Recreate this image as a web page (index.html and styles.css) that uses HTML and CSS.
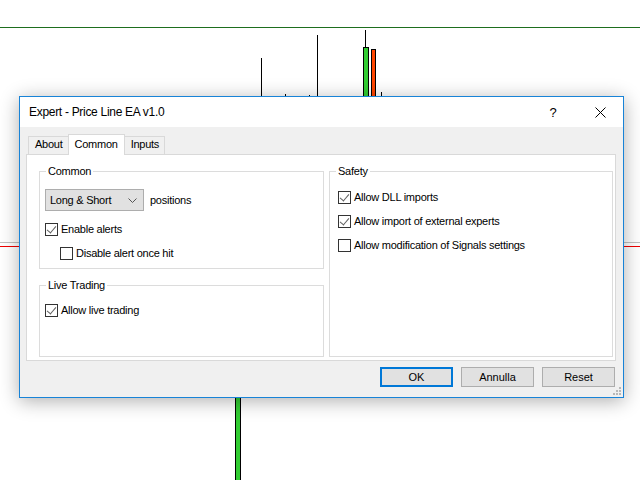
FILE: index.html
```html
<!DOCTYPE html>
<html lang="en">
<head>
    <meta charset="UTF-8">
    <title>Expert - Price Line EA v1.0</title>
    <link rel="stylesheet" href="styles.css">
</head>
<body>
    <div class="chart">
        <!-- price chart behind the dialog -->
        <svg class="chart-plot" width="640" height="480" viewBox="0 0 640 480">
            <line x1="0" y1="27.5" x2="640" y2="27.5" stroke="#1e6e1e" stroke-width="1"/>
            <line x1="0" y1="242.5" x2="640" y2="242.5" stroke="#c0c0c0" stroke-width="1"/>
            <line x1="0" y1="246.5" x2="640" y2="246.5" stroke="#f00000" stroke-width="1"/>
            <g stroke="#000" stroke-width="1">
                <line x1="261.5" y1="58" x2="261.5" y2="110"/>
                <line x1="285.5" y1="94" x2="285.5" y2="110"/>
                <line x1="309.5" y1="95" x2="309.5" y2="110"/>
                <line x1="317.5" y1="35" x2="317.5" y2="110"/>
                <line x1="365.5" y1="30" x2="365.5" y2="48"/>
                <line x1="381.5" y1="92" x2="381.5" y2="110"/>
                <rect x="363.5" y="47.5" width="5" height="70" fill="#32cd32"/>
                <rect x="371.5" y="49.5" width="4" height="70" fill="#ff4500"/>
                <rect x="235.5" y="380.5" width="5" height="110" fill="#32cd32"/>
            </g>
        </svg>

        <div class="dialog">
            <div class="titlebar">
                <span class="title">Expert - Price Line EA v1.0</span>
                <span class="title-help">?</span>
                <span class="title-close">
                    <svg width="11" height="11" viewBox="0 0 11 11">
                        <path d="M0.5 0.5 L10.5 10.5 M10.5 0.5 L0.5 10.5" stroke="#000" stroke-width="1" fill="none"/>
                    </svg>
                </span>
            </div>

            <div class="dialog-body">
                <div class="tabs">
                    <span class="tab">About</span>
                    <span class="tab active">Common</span>
                    <span class="tab">Inputs</span>
                </div>

                <div class="tab-panel">
                    <div class="col">
                        <div class="group group-common">
                            <span class="group-title">Common</span>
                            <div class="row">
                                <div class="select">
                                    <span>Long &amp; Short</span>
                                    <svg width="9" height="5" viewBox="0 0 9 5">
                                        <path d="M0.5 0.5 L4.5 4.5 L8.5 0.5" stroke="#555" stroke-width="1" fill="none"/>
                                    </svg>
                                </div>
                                <span class="select-note">positions</span>
                            </div>
                            <div class="check checked">
                                <span class="box"></span>Enable alerts
                            </div>
                            <div class="check sub">
                                <span class="box"></span>Disable alert once hit
                            </div>
                        </div>

                        <div class="group group-live">
                            <span class="group-title">Live Trading</span>
                            <div class="check checked">
                                <span class="box"></span>Allow live trading
                            </div>
                        </div>
                    </div>

                    <div class="group group-safety">
                        <span class="group-title">Safety</span>
                        <div class="check checked">
                            <span class="box"></span>Allow DLL imports
                        </div>
                        <div class="check checked">
                            <span class="box"></span>Allow import of external experts
                        </div>
                        <div class="check">
                            <span class="box"></span>Allow modification of Signals settings
                        </div>
                    </div>
                </div>

                <div class="buttons">
                    <button class="btn btn-default">OK</button>
                    <button class="btn">Annulla</button>
                    <button class="btn">Reset</button>
                </div>

                <svg class="grip" width="8" height="8" viewBox="0 0 8 8">
                    <g fill="#b8b8b8">
                        <rect x="6" y="0" width="2" height="2"/>
                        <rect x="3" y="3" width="2" height="2"/>
                        <rect x="6" y="3" width="2" height="2"/>
                        <rect x="0" y="6" width="2" height="2"/>
                        <rect x="3" y="6" width="2" height="2"/>
                        <rect x="6" y="6" width="2" height="2"/>
                    </g>
                </svg>
            </div>
        </div>
    </div>
</body>
</html>
```

FILE: styles.css
```css
* {
    margin: 0;
    padding: 0;
    box-sizing: border-box;
}

body {
    font-family: "Liberation Sans", Arial, sans-serif;
    font-size: 11px;
    letter-spacing: -0.25px;
    color: #000;
    background: #fff;
    overflow: hidden;
}

.chart {
    position: relative;
    width: 640px;
    height: 480px;
    background: #fff;
}

.chart-plot {
    position: absolute;
    left: 0;
    top: 0;
}

/* dialog window floating over the chart */
.dialog {
    position: absolute;
    left: 19px;
    top: 96px;
    width: 605px;
    height: 302px;
    border: 1px solid #1883d7;
    background: #f0f0f0;
    box-shadow: 0 3px 18px rgba(0, 0, 0, 0.32);
    display: flex;
    flex-direction: column;
}

.titlebar {
    height: 30px;
    background: #fff;
    display: flex;
    align-items: center;
    padding-left: 9px;
}

.title {
    flex: 1;
    font-size: 12px;
    letter-spacing: -0.3px;
}

.title-help {
    font-size: 13px;
    width: 46px;
    text-align: center;
    margin-right: 1px;
}

.title-close {
    width: 46px;
    display: flex;
    justify-content: center;
}

.dialog-body {
    flex: 1;
    position: relative;
    padding: 7px 7px 0 6px;
}

.tabs {
    display: flex;
    align-items: flex-end;
    height: 20px;
    padding-left: 2px;
    position: relative;
    z-index: 1;
}

.tab {
    height: 18px;
    line-height: 15px;
    padding: 0 5px 0 6px;
    border: 1px solid #d9d9d9;
    border-bottom: none;
    background: #f0f0f0;
}

.tab + .tab {
    margin-left: -1px;
}

.tab.active {
    height: 21px;
    line-height: 19px;
    padding: 0 6px;
    background: #fff;
    margin-bottom: -1px;
}

.tab-panel {
    height: 207px;
    background: #fff;
    border: 1px solid #d9d9d9;
    display: flex;
    gap: 5px;
    padding: 16px 2px 3px 12px;
}

.col {
    display: flex;
    flex-direction: column;
    gap: 16px;
}

.group {
    position: relative;
    width: 285px;
    border: 1px solid #dcdcdc;
}

.group-title {
    position: absolute;
    left: 6px;
    top: -8px;
    padding: 0 2px;
    background: #fff;
    line-height: 14px;
}

.group-common {
    height: 98px;
    padding: 17px 5px 0 5px;
}

.group-live {
    flex: 1;
    padding: 18px 5px 0 5px;
}

.group-safety {
    padding: 19px 8px 0 8px;
    display: flex;
    flex-direction: column;
    gap: 11px;
}

.row {
    display: flex;
    align-items: center;
    gap: 6px;
}

.select {
    width: 99px;
    height: 22px;
    background: #e1e1e1;
    border: 1px solid #adadad;
    display: flex;
    align-items: center;
    justify-content: space-between;
    padding: 0 6px 0 4px;
}

.check {
    display: flex;
    align-items: center;
    height: 13px;
    line-height: 13px;
    white-space: nowrap;
}

.group-common .check {
    margin-top: 12px;
}

.group-common .check.sub {
    margin-top: 11px;
    padding-left: 15px;
}

.box {
    width: 13px;
    height: 13px;
    border: 1px solid #333;
    background: #fff;
    margin-right: 3px;
    flex: none;
    position: relative;
}

/* tick drawn with two borders of a rotated box */
.check.checked .box::after {
    content: "";
    position: absolute;
    left: 3px;
    top: 0px;
    width: 4px;
    height: 8px;
    border-right: 1px solid #606060;
    border-bottom: 1px solid #606060;
    transform: rotate(40deg);
}

.buttons {
    display: flex;
    justify-content: flex-end;
    gap: 8px;
    margin-top: 6px;
    margin-right: 1px;
}

.btn {
    width: 73px;
    height: 20px;
    background: #e1e1e1;
    border: 1px solid #adadad;
    font-family: "Liberation Sans", Arial, sans-serif;
    font-size: 11px;
    color: #000;
}

.btn-default {
    border: 2px solid #0078d7;
}

.grip {
    position: absolute;
    right: 2px;
    bottom: 2px;
}
```
